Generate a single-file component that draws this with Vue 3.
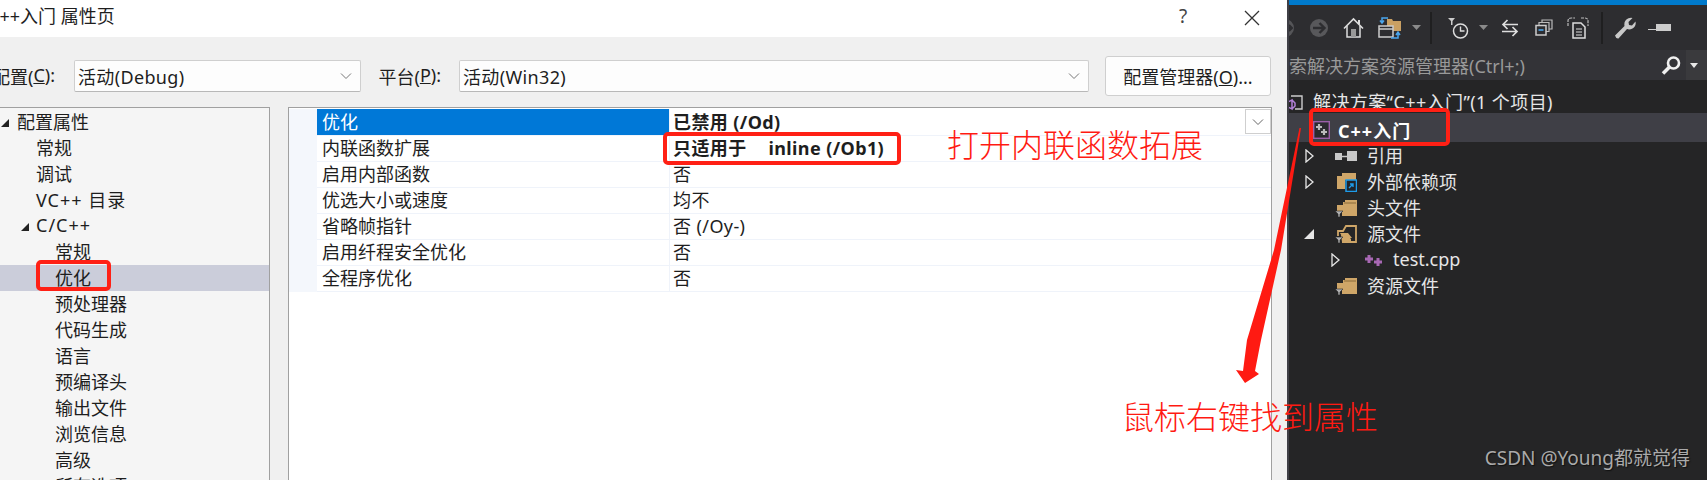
<script setup>
const treeRows = [
  { t: '配置属性', lv: 1, arrow: true },
  { t: '常规', lv: 2 },
  { t: '调试', lv: 2 },
  { t: 'VC++ 目录', lv: 2, wide: true },
  { t: 'C/C++', lv: 2, arrow: true, wide: true },
  { t: '常规', lv: 3 },
  { t: '优化', lv: 3, sel: true },
  { t: '预处理器', lv: 3 },
  { t: '代码生成', lv: 3 },
  { t: '语言', lv: 3 },
  { t: '预编译头', lv: 3 },
  { t: '输出文件', lv: 3 },
  { t: '浏览信息', lv: 3 },
  { t: '高级', lv: 3 },
  { t: '所有选项', lv: 3 },
]
const gridRows = [
  { k: '优化', v: '已禁用 (/Od)', sel: true, bold: true },
  { k: '内联函数扩展', v: '只适用于\u3000\u2009inline (/Ob1)', bold: true },
  { k: '启用内部函数', v: '否' },
  { k: '优选大小或速度', v: '均不' },
  { k: '省略帧指针', v: '否 (/Oy-)' },
  { k: '启用纤程安全优化', v: '否' },
  { k: '全程序优化', v: '否' },
]
const files = [
  { t: '引用', lv: 1, arrow: 'closed', icon: 'ref' },
  { t: '外部依赖项', lv: 1, arrow: 'closed', icon: 'ext' },
  { t: '头文件', lv: 1, icon: 'filter' },
  { t: '源文件', lv: 1, arrow: 'open', icon: 'open' },
  { t: 'test.cpp', lv: 2, arrow: 'closed', icon: 'cpp' },
  { t: '资源文件', lv: 1, icon: 'filter' },
]
</script>

<template>
  <div class="page">
    <section class="dialog">
      <header class="titlebar">
        <span class="title">C++入门 属性页</span>
        <span class="help">?</span>
        <svg class="close" width="16" height="16" viewBox="0 0 16 16"><path d="M1 1 15 15M15 1 1 15" stroke="#333" stroke-width="1.3" fill="none" /></svg>
      </header>

      <div class="body">
        <div class="config">
          <label class="lab lab1">配置(<u>C</u>):</label>
          <div class="combo combo1">
            <span>活动(Debug)</span>
            <svg width="12" height="8" viewBox="0 0 12 8"><path d="M1 1.5 6 6.5 11 1.5" stroke="#777" fill="none" /></svg>
          </div>
          <label class="lab lab2">平台(<u>P</u>):</label>
          <div class="combo combo2">
            <span>活动(Win32)</span>
            <svg width="12" height="8" viewBox="0 0 12 8"><path d="M1 1.5 6 6.5 11 1.5" stroke="#777" fill="none" /></svg>
          </div>
          <button class="mgr">配置管理器(<u>O</u>)...</button>
        </div>

        <div class="panels">
          <nav class="tree">
            <div v-for="r in treeRows" :key="r.t + r.lv" class="t-row" :class="['l' + r.lv, { sel: r.sel, wide: r.wide }]">
              <svg v-if="r.arrow" class="t-arrow" width="10" height="10" viewBox="0 0 10 10"><path d="M9 1V9H1Z" fill="#222" /></svg>
              <span class="t-text">{{ r.t }}</span>
            </div>
          </nav>

          <div class="grid">
            <div v-for="r in gridRows" :key="r.k" class="g-row" :class="{ sel: r.sel }">
              <span class="g-strip"></span>
              <span class="g-key">{{ r.k }}</span>
              <span class="g-val" :class="{ bold: r.bold }">
                <span>{{ r.v }}</span>
                <span v-if="r.sel" class="g-drop">
                  <svg width="12" height="8" viewBox="0 0 12 8"><path d="M1 1.5 6 6.5 11 1.5" stroke="#666" fill="none" /></svg>
                </span>
              </span>
            </div>
          </div>
        </div>
      </div>
    </section>

    <aside class="explorer">
      <div class="toolbar">
        <svg class="cell" width="15" height="22" viewBox="0 0 15 22"><circle cx="-2" cy="11" r="9" fill="#555558" /><path d="M-1 11H5M2 8l3 3-3 3" stroke="#2d2d30" stroke-width="2" fill="none" /></svg>
        <svg class="cell" width="20" height="20" viewBox="0 0 20 20"><circle cx="10" cy="10" r="9" fill="#58585b" /><path d="M4 10H15M10.500 5l5 5-5 5" stroke="#2d2d30" stroke-width="2.400" fill="none" /></svg>
        <svg class="cell" width="21" height="21" viewBox="0 0 21 21"><path d="M1 11.500 10.500 2 20 11.500" stroke="#ddd" stroke-width="1.600" fill="none" /><path d="M4 9V20H17V9" stroke="#ddd" stroke-width="1.500" fill="none" /><rect x="8" y="12" width="5" height="8" fill="#999" /><rect x="15" y="3" width="2" height="4" fill="#ddd" /></svg>
        <svg class="cell" width="23" height="22" viewBox="0 0 23 22"><path d="M9 2H14L15 4H23V14H9Z" fill="#c9a063" /><rect x="1" y="9" width="14" height="11" fill="#2d2d30" stroke="#ccc" stroke-width="1.500" /><path d="M1 12H15" stroke="#ccc" stroke-width="1.500" /><path d="M10 1H4V6M2 3.500 4 6 6 3.500M13 21H20V15M18 18 20 15 22 18" stroke="#4aa6ee" stroke-width="1.500" fill="none" /></svg>
        <svg class="cell" width="9" height="5" viewBox="0 0 9 5"><path d="M0 0H9L4.500 5Z" fill="#8a8a8a" /></svg>
        <span class="sep"></span>
        <svg class="cell" width="21" height="22" viewBox="0 0 21 22"><path d="M0 1H7L4.500 4V8H3V4Z" fill="#ccc" /><circle cx="12.500" cy="14" r="7" stroke="#ddd" stroke-width="1.500" fill="none" /><path d="M12.500 9.500V14H16.500" stroke="#ddd" stroke-width="1.400" fill="none" /></svg>
        <svg class="cell" width="9" height="5" viewBox="0 0 9 5"><path d="M0 0H9L4.500 5Z" fill="#8a8a8a" /></svg>
        <svg class="cell" width="18" height="18" viewBox="0 0 18 18"><path d="M17 5.500H2M6.500 1 2 5.500 6.500 10M1 12.500H16M11.500 8 16 12.500 11.500 17" stroke="#ddd" stroke-width="1.700" fill="none" /></svg>
        <svg class="cell" width="18" height="17" viewBox="0 0 18 17"><path d="M7 4V1H17V10H14" stroke="#bbb" stroke-width="1.200" fill="none" /><path d="M4 6.500V3.500H14V12.500H11" stroke="#bbb" stroke-width="1.200" fill="none" /><rect x="1" y="6.500" width="10" height="9.500" fill="#2d2d30" stroke="#ccc" stroke-width="1.500" /><path d="M3.500 11H8.500" stroke="#4aa6ee" stroke-width="1.600" /></svg>
        <svg class="cell" width="22" height="22" viewBox="0 0 22 22"><path d="M1 9V4Q1 1 4 1H8M14 1H18Q21 1 21 4V9" stroke="#bbb" stroke-width="1.200" stroke-dasharray="3 1" fill="none" /><path d="M6 6H14L18 10V21H6Z" fill="#2d2d30" stroke="#ddd" stroke-width="1.500" /><path d="M9 12H15M9 15H15M9 18H15" stroke="#ddd" stroke-width="1.200" /></svg>
        <span class="sep"></span>
        <svg class="cell" width="22" height="22" viewBox="0 0 22 22"><path d="M1 18.500 10.500 9Q9.500 3.500 14.500 1.200 17 .4 18.500 1L14.500 5 15 8 18 8.500 21.500 4.500Q22.500 9 18.500 11.500 15.500 13 13 12L4.500 21.500Q2 22 1 18.500Z" fill="#c8c8c8" /></svg>
        <svg class="cell" width="23" height="7" viewBox="0 0 23 7"><path d="M0 6H8V5H0Z" fill="#ccc" /><rect x="8" y="0" width="15" height="7" fill="#ccc" /></svg>
      </div>

      <div class="search">
        <div class="search-box">
          <span class="search-text">搜索解决方案资源管理器(Ctrl+;)</span>
          <svg width="20" height="19" viewBox="0 0 20 19"><circle cx="12.500" cy="7" r="5.500" stroke="#f0f0f0" stroke-width="2.600" fill="none" /><path d="M8.500 11 2 17.500" stroke="#f0f0f0" stroke-width="3.600" /></svg>
        </div>
        <svg class="search-caret" width="8" height="5" viewBox="0 0 8 5"><path d="M0 0H8L4 5Z" fill="#e8e8e8" /></svg>
      </div>

      <div class="sol-tree">
        <div class="x-row root">
          <span class="sol-slot">
            <svg class="i-sol" width="17" height="17" viewBox="0 0 17 17"><path d="M4 2H15V15H8" stroke="#ccc" stroke-width="1.400" fill="none" /><path d="M1 8 5 6V15L1 13Z M5 6 8 9V12L5 15" stroke="#b180d7" stroke-width="1.500" fill="none" /></svg>
          </span>
          <span class="root-text">解决方案“C++入门”(1 个项目)</span>
        </div>
        <div class="x-row project">
          <svg class="i-proj" width="17" height="18" viewBox="0 0 17 18"><rect x=".7" y=".7" width="15.600" height="16.600" fill="#2b2b2e" stroke="#9b5fa8" stroke-width="1.400" /><path d="M6 3V9M3 6H9M11 8V14M8 11H14" stroke="#bbb" stroke-width="2.200" /></svg>
          <span class="proj-text">C++入门</span>
        </div>
        <div v-for="f in files" :key="f.t" class="x-row file" :class="'f' + f.lv">
          <span class="x-arrow">
            <svg v-if="f.arrow === 'closed'" width="9" height="14" viewBox="0 0 9 14"><path d="M1 1 8 7 1 13Z" stroke="#e6e6e6" stroke-width="1.300" fill="none" /></svg>
            <svg v-else-if="f.arrow === 'open'" width="10" height="10" viewBox="0 0 10 10"><path d="M10 0V10H0Z" fill="#e6e6e6" /></svg>
          </span>
          <span class="x-icon">
            <svg v-if="f.icon === 'ref'" width="22" height="12" viewBox="0 0 22 12"><rect x="0" y="3" width="7" height="7" fill="#c8c8c8" /><path d="M7 6.500H12" stroke="#c8c8c8" stroke-width="1.500" /><rect x="12" y="1" width="10" height="10" fill="#c8c8c8" /></svg>
            <svg v-else-if="f.icon === 'ext'" width="21" height="20" viewBox="0 0 21 20"><path d="M1 4H6V1H20V8H9V17H1Z" fill="#cfa668" /><rect x="10" y="8" width="10.500" height="11.500" fill="#20242a" stroke="#1e9be8" stroke-width="1.500" /><path d="M13 16 17 12M14 12H17V15" stroke="#1e9be8" stroke-width="1.400" fill="none" /></svg>
            <svg v-else-if="f.icon === 'filter'" width="22" height="18" viewBox="0 0 22 18"><path d="M2 6H8V3H10V1H22V17H7V12H2Z" fill="#cfa668" /><path d="M9 4H21" stroke="#8a6a38" stroke-width="1" /><path d="M0 12H8L5 15V18H3V15Z" fill="#b0b0b0" stroke="#252526" stroke-width=".6" /></svg>
            <svg v-else-if="f.icon === 'open'" width="22" height="18" viewBox="0 0 22 18"><path d="M3 11V6H8L11 1H21V17H7" stroke="#cfa668" stroke-width="1.800" fill="none" /><path d="M6 10H12L16 14V17H7Z M5 8H13L17 13H8Z" fill="#cfa668" /><path d="M0 12H8L5 15V18H3V15Z" fill="#b0b0b0" stroke="#252526" stroke-width=".6" /></svg>
            <svg v-else width="19" height="13" viewBox="0 0 19 13"><path d="M5 1V9M1 5H9M14 4V12M10 8H18" stroke="#a868b4" stroke-width="3" /></svg>
          </span>
          <span class="file-text">{{ f.t }}</span>
        </div>
      </div>
    </aside>

    <div class="mark mark-opt"></div>
    <div class="mark mark-inline"></div>
    <div class="mark mark-proj"></div>
    <svg class="arrow" width="1707" height="480" viewBox="0 0 1707 480"><polygon points="1299.500,128 1274,250 1247,340 1243,371 1236,370 1245,383 1259,374 1255,371 1261,340 1281,250 1301,128" fill="#ff1a12" /></svg>
    <span class="note note1">打开内联函数拓展</span>
    <span class="note note2">鼠标右键找到属性</span>
    <span class="wm">CSDN @Young都就觉得</span>
  </div>
</template>

<style scoped>
.page {
  position: relative;
  display: flex;
  width: 1707px;
  height: 480px;
  overflow: hidden;
  font-family: "Noto Sans", "Noto Sans CJK SC", sans-serif;
  font-size: 18px;
  color: #1e1e1e;
}
.dialog {
  width: 1287px;
  flex: none;
  display: flex;
  flex-direction: column;
  overflow: hidden;
  background: #f0f0f0;
}
.titlebar {
  box-sizing: border-box;
  flex: none;
  height: 37px;
  padding-bottom: 5px;
  background: #fff;
  display: flex;
  align-items: center;
}
.title {
  margin-left: -12px;
  width: 1191px;
  line-height: 30px;
}
.help {
  width: 35px;
  color: #444;
  font-size: 19px;
}
.close {
  margin-left: 30px;
  margin-top: 3px;
}
.config {
  display: flex;
  align-items: center;
  height: 40px;
  margin-top: 19px;
}
.lab {
  display: flex;
  justify-content: flex-end;
  white-space: pre;
  flex: none;
}
.lab1 {
  width: 55px;
}
.lab2 {
  width: 63px;
  margin-left: 17px;
}
.combo {
  flex: none;
  box-sizing: border-box;
  height: 32px;
  display: flex;
  align-items: center;
  justify-content: space-between;
  padding: 0 8px 0 3px;
  letter-spacing: 0.35px;
  background: #fdfdfd;
  border: 1px solid #cfcfcf;
  border-bottom-color: #b8b8b8;
  border-radius: 2px;
}
.combo1 {
  width: 287px;
  margin-left: 19px;
}
.combo2 {
  width: 630px;
  margin-left: 18px;
}
.mgr {
  flex: none;
  box-sizing: border-box;
  width: 166px;
  height: 40px;
  margin-left: 16px;
  padding: 0;
  font: inherit;
  color: inherit;
  background: #fdfdfd;
  border: 1px solid #cfcfcf;
  border-radius: 3px;
}
.panels {
  display: flex;
  gap: 18px;
  margin-top: 11px;
  flex: 1;
  min-height: 0;
}
.tree {
  box-sizing: border-box;
  width: 270px;
  flex: none;
  padding-top: 1px;
  background: #f5f5f5;
  border-top: 1px solid #a0a0a0;
  border-right: 1px solid #a0a0a0;
}
.t-row {
  position: relative;
  display: flex;
  align-items: center;
  height: 26px;
  white-space: nowrap;
}
.t-text {
  margin-bottom: 2px;
}
.t-row.wide {
  letter-spacing: 1px;
}
.t-row.sel {
  background: #cbcdda;
}
.l1 {
  padding-left: 17px;
}
.l2 {
  padding-left: 36px;
}
.l3 {
  padding-left: 55px;
}
.t-arrow {
  position: absolute;
  top: 9px;
}
.l1 .t-arrow {
  left: 0;
}
.l2 .t-arrow {
  left: 20px;
}
.grid {
  box-sizing: border-box;
  width: 984px;
  flex: none;
  padding-top: 1px;
  background: #fff;
  border: 1px solid #a0a0a0;
  border-bottom: none;
}
.g-row {
  display: grid;
  grid-template-columns: 28px 352px 1fr;
  height: 26px;
  line-height: 26px;
  white-space: pre;
}
.g-strip {
  background: #f4f7fc;
}
.g-key {
  padding-left: 5px;
  border-bottom: 1px solid #eff3fa;
}
.g-val {
  display: flex;
  justify-content: space-between;
  padding-left: 3px;
  letter-spacing: 0.4px;
  border-left: 1px solid #eff3fa;
  border-bottom: 1px solid #eff3fa;
}
.g-row.sel .g-key {
  background: #0078d7;
  color: #fff;
}
.g-val.bold {
  font-weight: 700;
}
.g-drop {
  box-sizing: border-box;
  width: 26px;
  height: 25px;
  display: flex;
  align-items: center;
  justify-content: center;
  background: #fff;
  border: 1px solid #cfcfcf;
}
.explorer {
  flex: 1;
  min-width: 0;
  display: flex;
  flex-direction: column;
  overflow: hidden;
  background: #252526;
  border-left: 2px solid #3f3f46;
  color: #e6e6e6;
}
.toolbar {
  box-sizing: border-box;
  flex: none;
  height: 50px;
  margin-left: -2px;
  display: grid;
  grid-template-columns: 15px 34px 34px 38px 16px 14px 40px 10px 44px 24px 44px 4px 42px 26px;
  align-items: center;
  justify-items: center;
  background: #2d2d30;
  border-top: 5px solid #007acc;
}
.cell {
  display: block;
  overflow: hidden;
}
.sep {
  width: 2px;
  height: 32px;
  background: #1f1f20;
}
.search {
  flex: none;
  height: 30px;
  display: flex;
  align-items: center;
  background: #3a3a3d;
}
.search-box {
  box-sizing: border-box;
  width: 397px;
  height: 30px;
  display: flex;
  align-items: center;
  justify-content: space-between;
  padding-right: 5px;
  overflow: hidden;
  background: #333337;
}
.search-text {
  margin-left: -18px;
  color: #999;
  white-space: nowrap;
}
.search-caret {
  margin-left: 4px;
}
.sol-tree {
  flex: 1;
}
.x-row {
  display: flex;
  align-items: center;
  white-space: nowrap;
}
.root {
  box-sizing: border-box;
  height: 33px;
  padding-top: 11px;
  line-height: 26px;
  overflow: hidden;
}
.sol-slot {
  flex: none;
  width: 24px;
  height: 17px;
  display: block;
}
.i-sol {
  display: block;
  margin-left: -2px;
}
.root-text {
  letter-spacing: 0.4px;
}
.project {
  box-sizing: border-box;
  height: 29px;
  padding: 4px 0 0 24px;
  background: #3f3f46;
  color: #fff;
  font-weight: 700;
}
.i-proj {
  margin-right: 8px;
}
.proj-text {
  letter-spacing: 1px;
}
.file {
  height: 26px;
}
.file:nth-child(3) {
  margin-top: 1px;
}
.file-text {
  margin-bottom: 3px;
}
.f1 {
  padding-left: 14px;
}
.f2 {
  padding-left: 40px;
}
.x-arrow {
  width: 12px;
  display: flex;
  justify-content: center;
}
.x-icon {
  box-sizing: border-box;
  width: 52px;
  display: flex;
  justify-content: flex-end;
  align-items: center;
  padding-right: 10px;
}
.mark {
  position: absolute;
  box-sizing: border-box;
  border: 4px solid #ff2015;
  border-radius: 5px;
}
.mark-opt {
  left: 36px;
  top: 260px;
  width: 75px;
  height: 31px;
}
.mark-inline {
  left: 663px;
  top: 132px;
  width: 238px;
  height: 33px;
}
.mark-proj {
  left: 1309px;
  top: 108px;
  width: 141px;
  height: 38px;
}
.arrow {
  position: absolute;
  left: 0;
  top: 0;
  pointer-events: none;
}
.note {
  position: absolute;
  font-size: 32px;
  font-weight: 300;
  line-height: 40px;
  color: #ff1a12;
  white-space: nowrap;
}
.note1 {
  left: 947px;
  top: 125px;
}
.note2 {
  left: 1122px;
  top: 397px;
}
.wm {
  position: absolute;
  right: 17px;
  top: 445px;
  font-size: 19px;
  line-height: 26px;
  color: #aaa;
  text-shadow: 1px 1px 1px #111;
  white-space: nowrap;
}
</style>
